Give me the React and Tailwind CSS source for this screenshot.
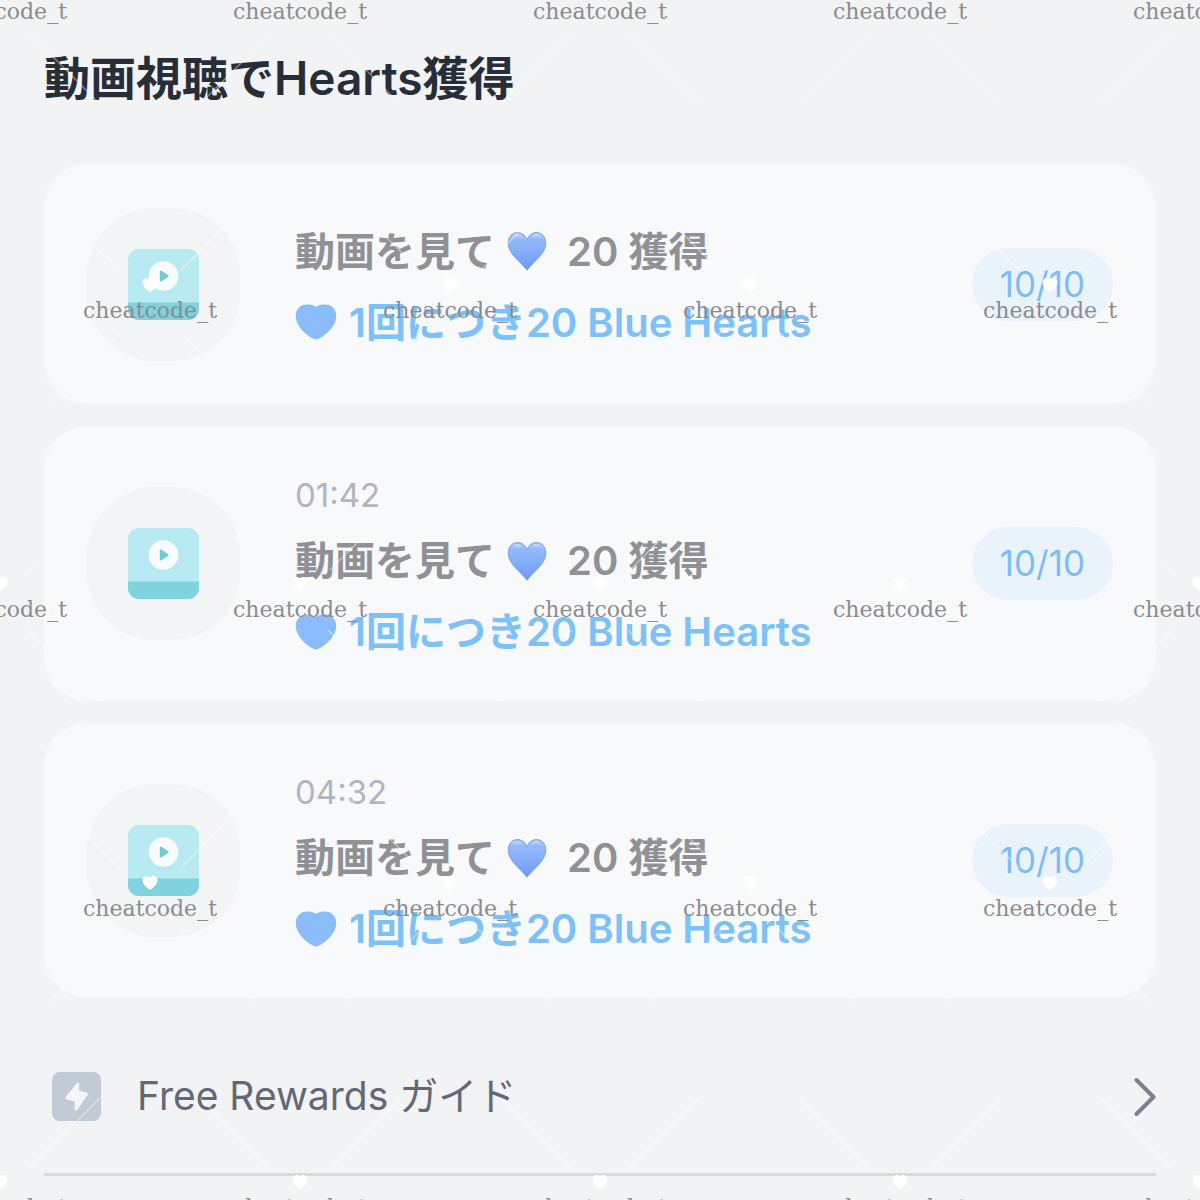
import React from "react";

const videos = [
  { id: 1, time: null, count: "10/10" },
  { id: 2, time: "01:42", count: "10/10" },
  { id: 3, time: "04:32", count: "10/10" },
];

// Watermark marks sit on a staggered 300 x 299 grid
const marks = [0, 1, 2, 3, 4].flatMap((row) =>
  [0, 1, 2, 3, 4].map((col) => ({
    x: col * 300 + (row % 2 ? 150 : 0),
    y: 12 + row * 299,
  }))
);

const VideoIcon = () => (
  <svg viewBox="0 0 71 71" className="w-[71px] h-[71px]" aria-hidden="true">
    <rect width="71" height="71" rx="11" fill="#b7eaf1" />
    <path d="M0 53.500h71V60a11 11 0 0 1-11 11H11A11 11 0 0 1 0 60z" fill="#7fd2de" />
    <circle cx="35.500" cy="27" r="14.800" fill="#f9fbfc" />
    <path d="M33.200 21.600l6.800 4.400a1.200 1.200 0 0 1 0 2l-6.800 4.400a1 1 0 0 1-1.400-1v-8.800a1 1 0 0 1 1.400-1z" fill="#74cbd8" />
  </svg>
);

const GlossyHeart = () => (
  <svg viewBox="0 0 40 40" className="w-10 h-10 mx-3" aria-hidden="true">
    <defs>
      <linearGradient id="heartFill" x1="0" y1="0" x2="0" y2="1">
        <stop offset="0" stopColor="#9bbefa" />
        <stop offset="0.5" stopColor="#86aff9" />
        <stop offset="1" stopColor="#6f99ef" />
      </linearGradient>
      <linearGradient id="heartGloss" x1="0" y1="0" x2="0" y2="1">
        <stop offset="0" stopColor="#cfe0fd" />
        <stop offset="1" stopColor="#92b8fa" stopOpacity="0" />
      </linearGradient>
    </defs>
    <path
      d="M20 8.500C18 4 14.500 1.500 10.500 1.500 5 1.500 1.200 6 1.200 12c0 11 11.300 17.500 18.800 27.200C27.500 29.500 38.800 23 38.800 12c0-6-3.800-10.500-9.300-10.500C25.500 1.500 22 4 20 8.500z"
      fill="url(#heartFill)"
      stroke="#7498e6"
      strokeWidth="0.800"
    />
    <path d="M18.500 9C16.500 5 14 3 10.500 3 6.500 3 3.500 5.500 3 9.500c4-2.500 11-3 15.500-.5z" fill="url(#heartGloss)" />
    <path d="M21.500 9C23.500 5 26 3 29.500 3c4 0 7 2.500 7.500 6.500-4-2.500-11-3-15.500-.5z" fill="url(#heartGloss)" />
  </svg>
);

const FlatHeart = () => (
  <svg viewBox="0 0 42 36" className="w-[42px] h-9 mr-3" aria-hidden="true">
    <path
      d="M21 2.800C18.500 1.100 15.500.5 12 .5 5.500.5.800 5 .8 12c0 9.500 8 17 16.500 22.300 2.700 1.500 4.700 1.500 7.400 0C33.200 29 41.200 21.500 41.200 12 41.200 5 36.500.5 30 .5c-3.500 0-6.500.6-9 2.300z"
      fill="#8bbcfa"
    />
  </svg>
);

const VideoCard = ({ video }) => (
  <li className="flex items-center min-h-60 px-[43px] py-[34px] rounded-[44px] bg-[#f8f9fb]">
    <div className="flex shrink-0 items-center justify-center w-[153px] h-[153px] rounded-[68px] bg-[#f3f4f5]">
      <VideoIcon />
    </div>
    <div className="flex-1 min-w-0 ml-[55px] pt-[5px] whitespace-nowrap">
      {video.time && (
        <p className="text-[33px] leading-[60px] text-[#b0b5bf]">{video.time}</p>
      )}
      <h2 className="flex items-center text-[40px] leading-[71px] font-semibold text-[#8f9196]">
        動画を見て
        <GlossyHeart />
        <span className="ml-2">20 獲得</span>
      </h2>
      <p className="flex items-center text-[40px] leading-[71px] font-semibold text-[#7cc1f9]">
        <FlatHeart />
        1回につき20 Blue Hearts
      </p>
    </div>
    <span className="shrink-0 px-7 rounded-full bg-[#ebf3fa] text-[35px] leading-[73px] text-[#7cbdf5]">
      {video.count}
    </span>
  </li>
);

const Watermark = () => (
  <div className="absolute inset-0 overflow-hidden pointer-events-none" aria-hidden="true">
    {marks.map((mark) => (
      <div
        key={`${mark.x}-${mark.y}`}
        className="absolute"
        style={{ left: mark.x, top: mark.y }}
      >
        <svg viewBox="-110 -120 220 240" className="absolute -left-[110px] -top-[120px] w-[220px] h-[240px]">
          <path
            d="M-30-40L-100-110M30-40L100-110M-28 20L-100 92M28 20L100 92"
            stroke="#fff"
            strokeOpacity="0.400"
            strokeWidth="1.500"
          />
          <path
            d="M0-19C-5-22.500-7.500-25.500-7.500-28.500-7.500-33-2-34.500 0-31 2-34.500 7.500-33 7.500-28.500 7.500-25.500 5-22.500 0-19z"
            fill="#fff"
          />
        </svg>
        <span className="absolute -translate-x-1/2 -translate-y-1/2 font-['DejaVu_Serif',serif] text-[22px] leading-7 text-[#8a8c8f]">
          cheatcode_t
        </span>
      </div>
    ))}
  </div>
);

const App = () => {
  return (
    <div className="relative min-h-screen overflow-hidden bg-[#f2f3f5] font-[Inter,'Noto_Sans_CJK_JP',sans-serif]">
      <main className="px-11 pt-10" lang="ja">
        <h1 className="text-[46px] leading-[76px] font-semibold text-[#272e38]">
          動画視聴でHearts獲得
        </h1>

        <ul className="flex flex-col gap-[22px] mt-12">
          {videos.map((video) => (
            <VideoCard key={video.id} video={video} />
          ))}
        </ul>

        <a
          href="#guide"
          className="flex items-center mt-[22px] pl-2 h-[156px] border-b-3 border-[#d7dae2] text-[39px] text-[#636875]"
        >
          <svg viewBox="0 0 49 49" className="w-[49px] h-[49px] mr-9" aria-hidden="true">
            <rect width="49" height="49" rx="8" fill="#c2cad5" />
            <path
              d="M24.500 11.500c1-1.300 2.700-.8 2.700.8v6.200l7.400 2.100c1.400.4 1.700 1.500.9 2.600L25.300 38c-1 1.300-2.600.8-2.600-.8v-7.600l-8-2.200c-1.400-.4-1.700-1.500-.9-2.600z"
              fill="#f4f5f7"
            />
          </svg>
          <span className="flex-1">Free Rewards ガイド</span>
          <svg viewBox="0 0 22 40" className="w-[22px] h-10" aria-hidden="true">
            <path
              d="M2.500 3L19.500 20L2.500 37"
              fill="none"
              stroke="#7b818e"
              strokeWidth="4"
              strokeLinecap="round"
              strokeLinejoin="round"
            />
          </svg>
        </a>
      </main>
      <Watermark />
    </div>
  );
};

export default App;
